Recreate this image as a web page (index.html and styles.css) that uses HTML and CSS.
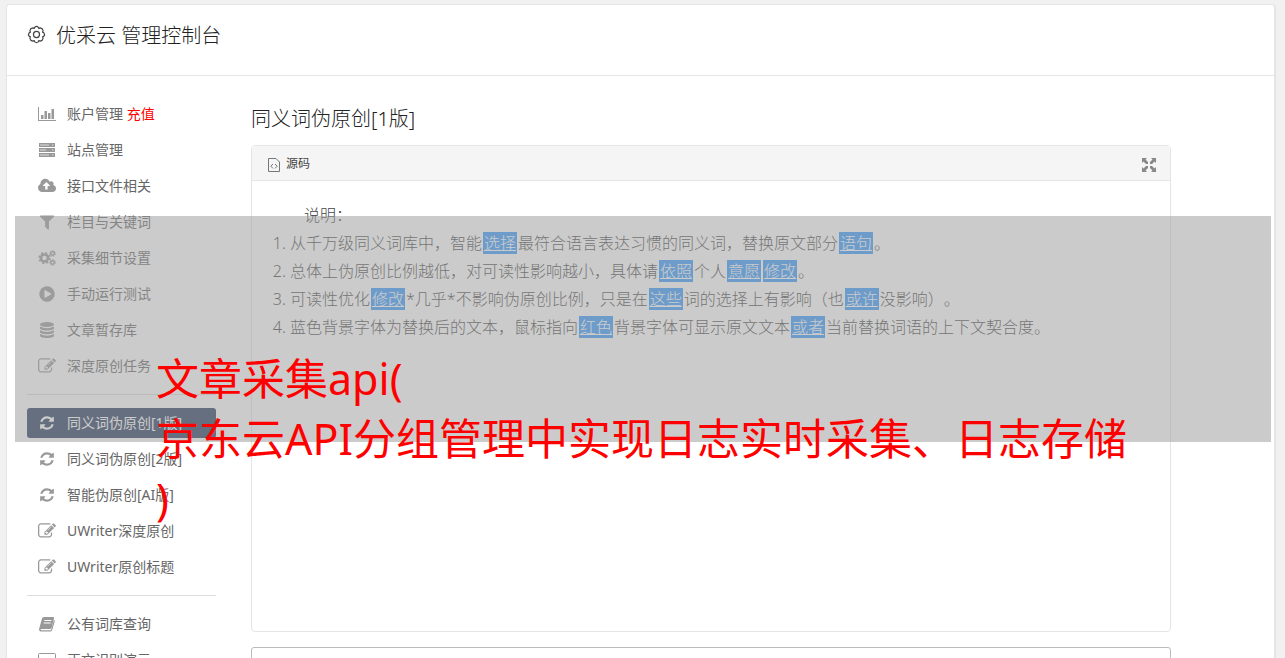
FILE: index.html
```html
<!DOCTYPE html>
<html lang="zh-CN">
<head>
    <meta charset="UTF-8">
    <title>优采云 管理控制台</title>
    <link rel="stylesheet" href="styles.css">
</head>
<body>
    <!-- shared icon shapes -->
    <svg class="sprite" aria-hidden="true">
        <symbol id="i-refresh" viewBox="-112 -112 2016 2016"><path d="M1639 1056q0 5-1 7-64 268-268 434.5t-478 166.5q-146 0-282.5-55t-243.5-157l-129 129q-19 19-45 19t-45-19-19-45v-448q0-26 19-45t45-19h448q26 0 45 19t19 45-19 45l-137 137q71 66 161 102t187 36q134 0 250-65t186-179q11-17 53-117 8-23 30-23h192q13 0 22.5 9.5t9.5 22.5zm25-800v448q0 26-19 45t-45 19h-448q-26 0-45-19t-19-45 19-45l138-138q-148-137-349-137-134 0-250 65t-186 179q-11 17-53 117-8 23-30 23h-199q-13 0-22.5-9.5t-9.5-22.5v-7q65-268 270-434.5t480-166.5q146 0 284 55.5t245 156.5l130-129q19-19 45-19t45 19 19 45z"/></symbol>
        <symbol id="i-edit" viewBox="0 0 1792 1792"><path d="M888 1184l116-116-152-152-116 116v56h96v96h56zm440-720q-16-16-33 1l-350 350q-17 17-1 33t33-1l350-350q17-17 1-33zm80 594v190q0 119-84.5 203.5t-203.5 84.5h-832q-119 0-203.5-84.5t-84.5-203.5v-832q0-119 84.5-203.5t203.5-84.5h832q63 0 117 25 15 7 18 23 3 17-9 29l-49 49q-14 14-32 8-23-6-45-6h-832q-66 0-113 47t-47 113v832q0 66 47 113t113 47h832q66 0 113-47t47-113v-126q0-13 9-22l64-64q15-15 35-7t20 29zm-96-738l288 288-672 672h-288v-288zm444 132l-92 92-288-288 92-92q28-28 68-28t68 28l152 152q28 28 28 68t-28 68z"/></symbol>
    </svg>

    <div class="page">
        <header class="header">
            <svg class="gear" viewBox="0 0 18 18"><path d="M7.200 1.200Q9-.2 10.800 1.200L11.500 2.500 13 2Q15.600 2.400 16 5L15.500 6.500 16.800 7.200Q18.200 9 16.800 10.800L15.500 11.500 16 13Q15.600 15.600 13 16L11.500 15.500 10.800 16.800Q9 18.200 7.200 16.800L6.500 15.500 5 16Q2.400 15.600 2 13L2.500 11.500 1.200 10.800Q-.2 9 1.200 7.200L2.500 6.500 2 5Q2.400 2.400 5 2L6.500 2.500z"/><circle cx="9" cy="9" r="3.200"/></svg>
            <h1>优采云 管理控制台</h1>
        </header>
        <div class="content">
            <nav class="sidebar">
                <a href="#"><svg viewBox="0 0 18 18"><path d="M0 2h1v13h17v1H0zM3 10h2.500v4H3zM6.500 6H9v8H6.500zM10 8h2.500v6H10zM13.500 4H16v10h-2.500z"/></svg><span>账户管理 <b>充值</b></span></a>
                <a href="#"><svg viewBox="0 0 18 18"><path d="M1 2h16v4H1zM1 7h16v4H1zM1 12h16v4H1z"/><path class="slot" d="M2 3.500h9v1H2zM2 8.500h6v1H2zM2 13.500h9v1H2zM14 3.500h1.500v1H14zM14 8.500h1.500v1H14zM14 13.500h1.500v1H14z"/></svg><span>站点管理</span></a>
                <a href="#"><svg viewBox="-64 0 1920 1792"><path d="M1216 864q0-14-9-23l-352-352q-9-9-23-9t-23 9l-351 351q-10 12-10 24 0 14 9 23t23 9h224v352q0 13 9.500 22.500t22.500 9.500h192q13 0 22.500-9.500t9.500-22.500v-352h224q13 0 22.500-9.500t9.500-22.500zm640 288q0 159-112.500 271.500t-271.500 112.500h-1088q-185 0-316.500-131.500t-131.500-316.500q0-130 70-240t188-165q-2-30-2-43 0-212 150-362t362-150q156 0 285.500 87t188.500 231q71-62 166-62 106 0 181 75t75 181q0 76-41 138 130 31 213.500 135.500t83.500 238.500z"/></svg><span>接口文件相关</span></a>
                <a href="#"><svg viewBox="0 0 1792 1792"><path d="M1595 295q17 41-14 70l-493 493v742q0 42-39 59-13 5-25 5-27 0-45-19l-256-256q-19-19-19-45v-486l-493-493q-31-29-14-70 17-39 59-39h1280q42 0 59 39z"/></svg><span>栏目与关键词</span></a>
                <a href="#"><svg class="cogs" viewBox="0 0 18 18"><circle cx="6.500" cy="9" r="3.500" stroke-width="2.600"/><circle cx="6.500" cy="9" r="5.300" stroke-width="1.600" stroke-dasharray="2.081"/><circle cx="14.500" cy="4.500" r="1.800" stroke-width="1.400"/><circle cx="14.500" cy="4.500" r="2.900" stroke-width="1" stroke-dasharray="1.300"/><circle cx="14.500" cy="13.500" r="1.800" stroke-width="1.400"/><circle cx="14.500" cy="13.500" r="2.900" stroke-width="1" stroke-dasharray="1.300"/></svg><span>采集细节设置</span></a>
                <a href="#"><svg viewBox="0 0 1792 1792"><path d="M896 128q209 0 385.500 103t279.500 279.500 103 385.500-103 385.500-279.500 279.500-385.500 103-385.500-103-279.500-279.500-103-385.500 103-385.500 279.500-279.500 385.500-103zm384 823q32-18 32-55t-32-55l-544-320q-31-19-64-1-32 19-32 56v640q0 37 32 56 16 8 32 8 17 0 32-9z"/></svg><span>手动运行测试</span></a>
                <a href="#"><svg viewBox="0 0 18 18"><ellipse cx="9" cy="3.500" rx="7" ry="2.500"/><path d="M2 5.500q7 3.500 14 0v1.700c0 3-14 3-14 0zM2 9.200q7 3.500 14 0v1.700c0 3-14 3-14 0zM2 13q7 3.500 14 0v1.700c0 3-14 3-14 0z"/></svg><span>文章暂存库</span></a>
                <a href="#"><svg><use href="#i-edit"/></svg><span>深度原创任务</span></a>
                <hr>
                <a href="#" class="active"><svg><use href="#i-refresh"/></svg><span>同义词伪原创[1版]</span></a>
                <a href="#"><svg><use href="#i-refresh"/></svg><span>同义词伪原创[2版]</span></a>
                <a href="#"><svg><use href="#i-refresh"/></svg><span>智能伪原创[AI版]</span></a>
                <a href="#"><svg><use href="#i-edit"/></svg><span>UWriter深度原创</span></a>
                <a href="#"><svg><use href="#i-edit"/></svg><span>UWriter原创标题</span></a>
                <hr>
                <a href="#"><svg viewBox="0 0 18 18"><path fill-rule="evenodd" d="M6 2h9q1.500 0 1 1.500L13.500 13q-.4 1-1.500 1H3.500q-1 0-1 .6t1 .6H13l3-10.200q1 .3.700 1.500L14.200 15q-.4 1.500-2 1.500H3q-2.500-.5-1.800-3L4 3.500Q4.500 2 6 2zM6.500 5l-.3 1h7l.3-1zM5.800 7.500l-.3 1h7l.3-1z"/></svg><span>公有词库查询</span></a>
                <a href="#"><svg viewBox="0 0 18 18"><path fill-rule="evenodd" d="M2 2h14q2 0 2 2v8q0 2-2 2h-5l1 2H6l1-2H2q-2 0-2-2V4q0-2 2-2zM1 3v8h16V3z"/></svg><span>正文识别演示</span></a>
            </nav>
            <main class="main">
                <h2>同义词伪原创[1版]</h2>
                <section class="editor">
                    <div class="toolbar">
                        <button type="button"><svg class="source" viewBox="0 0 12 14"><path d="M.5.500h7.500l3.500 3.500v9.500H.5zM5 6L2.800 8.200 5 10.400M7 6l2.200 2.200L7 10.400"/></svg>源码</button>
                        <button type="button" title="全屏"><svg class="expand" viewBox="0 0 14 14"><path d="M0 0h5L3.500 1.500 6 4v2H4L1.500 3.500 0 5zM14 0v5l-1.500-1.500L10 6H8V4l2.500-2.500L9 0zM0 14V9l1.500 1.500L4 8h2v2l-2.500 2.500L5 14zM14 14H9l1.500-1.500L8 10V8h2l2.500 2.500L14 9z"/></svg></button>
                    </div>
                    <div class="text">
                        <p>说明：</p>
                        <ol>
                            <li>从千万级同义词库中，智能<mark>选择</mark>最符合语言表达习惯的同义词，替换原文部分<mark>语句</mark>。</li>
                            <li>总体上伪原创比例越低，对可读性影响越小，具体请<mark>依照</mark>个人<mark>意愿</mark><mark>修改</mark>。</li>
                            <li>可读性优化<mark>修改</mark>*几乎*不影响伪原创比例，只是在<mark>这些</mark>词的选择上有影响（也<mark>或许</mark>没影响）。</li>
                            <li>蓝色背景字体为替换后的文本，鼠标指向<mark>红色</mark>背景字体可显示原文文本<mark>或者</mark>当前替换词语的上下文契合度。</li>
                        </ol>
                    </div>
                </section>
                <textarea class="result" aria-label="原文"></textarea>
            </main>
        </div>
    </div>

    <div class="banner">
        <p>文章采集api(<br>京东云API分组管理中实现日志实时采集、日志存储<br>)</p>
    </div>
</body>
</html>
```
FILE: styles.css
```css
* {
    box-sizing: border-box;
}
body {
    margin: 0;
    height: 100vh;
    overflow: hidden;
    background: #f1f1f1;
    color: #222;
    font-family: "Noto Sans", "Noto Sans CJK SC", sans-serif;
    font-weight: 300;
    text-spacing-trim: space-all;
}
h1, h2, p, ol {
    margin: 0;
    font-weight: 300;
}
.sprite {
    position: absolute;
    width: 0;
    height: 0;
}
.page {
    margin: 4px 9px 0 6px;
    background: #fff;
    border: 1px solid #e5e5e5;
    border-right-width: 2px;
    border-radius: 4px;
}
.header {
    display: flex;
    align-items: flex-start;
    gap: 10px;
    height: 71px;
    padding: 17px 20px 0;
    border-bottom: 1px solid #e5e5e5;
}
.header h1,
.main h2 {
    font-size: 20px;
    line-height: 28px;
}
.gear {
    width: 19px;
    height: 19px;
    margin-top: 3px;
    padding: 1px;
    overflow: visible;
    fill: none;
    stroke: #444;
    stroke-width: 1.3;
    stroke-linejoin: round;
}
.content {
    display: flex;
    gap: 35px;
    padding: 23px 20px;
}
.sidebar {
    display: flex;
    flex-direction: column;
    flex-shrink: 0;
    gap: 6px;
    width: 189px;
}
.sidebar a {
    display: flex;
    align-items: center;
    gap: 11px;
    height: 30px;
    padding: 0 11px;
    border-radius: 3px;
    color: #666;
    font-size: 14px;
    font-weight: 400;
    line-height: 20px;
    white-space: nowrap;
    text-decoration: none;
}
.sidebar b {
    color: #f00;
    font-weight: 400;
}
.sidebar svg {
    width: 18px;
    height: 18px;
    fill: #999;
}
.sidebar .slot {
    fill: #ddd;
}
.sidebar .cogs {
    fill: none;
    stroke: #999;
}
.sidebar .active {
    background: #23385b;
    color: #fff;
}
.sidebar .active svg {
    fill: #fff;
}
.sidebar hr {
    width: 100%;
    height: 1px;
    margin: 7px 0;
    border: none;
    background: #ddd;
}
.main {
    flex: 1;
    max-width: 920px;
    padding-top: 6px;
}
.editor {
    height: 487px;
    margin: 12px 0 15px;
    border: 1px solid #e5e5e5;
    border-radius: 4px;
}
.toolbar {
    display: flex;
    align-items: center;
    justify-content: space-between;
    height: 35px;
    padding: 0 14px 0 16px;
    background: #f5f5f5;
    border-bottom: 1px solid #e5e5e5;
}
.toolbar button {
    display: flex;
    align-items: center;
    gap: 6px;
    padding: 0;
    border: none;
    background: none;
    color: #444;
    font: inherit;
    font-size: 12px;
    font-weight: 400;
}
.toolbar svg {
    margin-top: 3px;
}
.source {
    width: 12px;
    height: 14px;
    fill: none;
    stroke: #777;
}
.expand {
    width: 14px;
    height: 14px;
    fill: #888;
}
.text {
    padding: 20px;
    color: #444;
    font-size: 16px;
    line-height: 28px;
}
.text p {
    text-indent: 2em;
}
.text ol {
    padding-left: 18px;
}
.text mark {
    margin: 0 1px;
    padding: 0 1px;
    background: #39f;
    color: #fff;
    text-decoration: underline;
}
.result {
    display: block;
    width: 100%;
    height: 200px;
    border: 1px solid #bbb;
    border-radius: 3px;
    resize: none;
}
.banner {
    position: absolute;
    top: 216px;
    left: 15px;
    right: 14px;
    height: 226px;
    padding: 133px 0 0 141px;
    background: rgba(159, 159, 159, .54);
    pointer-events: none;
}
.banner p {
    color: #f00;
    font-size: 43px;
    font-weight: 400;
    line-height: 60px;
    white-space: nowrap;
}
```
